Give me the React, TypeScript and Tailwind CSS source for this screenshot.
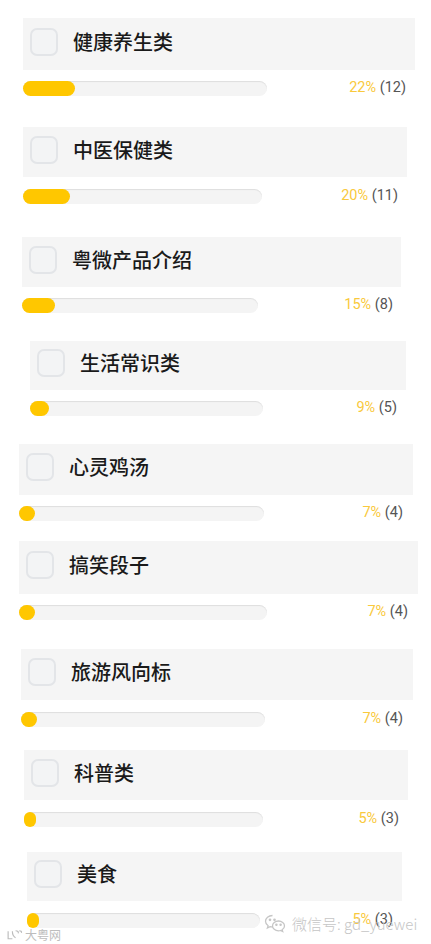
import React from "react";

type PollItem = {
  label: string;
  pct: string;
  count: string;
  fill: number;
  box: string;
  row: string;
  track: string;
};

// the source is a stitched screenshot, so each block sits a little differently
const items: PollItem[] = [
  { label: "健康养生类", pct: "22%", count: "(12)", fill: 52, box: "mt-[18px] ml-[23px] w-[392px] h-[52px]", row: "mt-[11px] ml-[23px] w-[383px]", track: "w-[244px]" },
  { label: "中医保健类", pct: "20%", count: "(11)", fill: 47, box: "mt-[31px] ml-[23px] w-[384px] h-[50px]", row: "mt-[12px] ml-[23px] w-[375px]", track: "w-[239px]" },
  { label: "粤微产品介绍", pct: "15%", count: "(8)", fill: 33, box: "mt-[33px] ml-[22px] w-[379px] h-[50px]", row: "mt-[11px] ml-[22px] w-[371px]", track: "w-[236px]" },
  { label: "生活常识类", pct: "9%", count: "(5)", fill: 19, box: "mt-[28px] ml-[30px] w-[376px] h-[49px]", row: "mt-[11px] ml-[30px] w-[367px]", track: "w-[233px]" },
  { label: "心灵鸡汤", pct: "7%", count: "(4)", fill: 16, box: "mt-[28px] ml-[19px] w-[394px] h-[51px]", row: "mt-[11px] ml-[19px] w-[384px]", track: "w-[245px]" },
  { label: "搞笑段子", pct: "7%", count: "(4)", fill: 16, box: "mt-[20px] ml-[19px] w-[399px] h-[53px]", row: "mt-[11px] ml-[19px] w-[389px]", track: "w-[248px]" },
  { label: "旅游风向标", pct: "7%", count: "(4)", fill: 16, box: "mt-[29px] ml-[21px] w-[392px] h-[51px]", row: "mt-[12px] ml-[21px] w-[382px]", track: "w-[244px]" },
  { label: "科普类", pct: "5%", count: "(3)", fill: 12, box: "mt-[23px] ml-[24px] w-[384px] h-[50px]", row: "mt-[12px] ml-[24px] w-[375px]", track: "w-[239px]" },
  { label: "美食", pct: "5%", count: "(3)", fill: 12, box: "mt-[25px] ml-[27px] w-[375px] h-[49px]", row: "mt-[12px] ml-[27px] w-[366px]", track: "w-[233px]" },
];

function PollRow({ item }: { item: PollItem }) {
  return (
    <div>
      <div className={`${item.box} flex items-center pb-[5px] pl-[7px] bg-[#f5f5f5]`}>
        <span className="w-[28px] h-[28px] shrink-0 rounded-[7px] border-2 border-[#e3e5e8] bg-[#f3f4f5]" />
        <span className="ml-[15px] text-[20px] leading-none font-medium text-[#1a1a1a] font-['Noto_Sans_CJK_SC',sans-serif]">
          {item.label}
        </span>
      </div>

      <div className={`${item.row} flex items-center justify-between`}>
        <div className={`${item.track} h-[15px] rounded-full bg-[#f4f4f4] shadow-[inset_0_1px_1px_rgba(0,0,0,0.09)]`}>
          <div className="h-full rounded-full bg-[#ffc700]" style={{ width: item.fill }} />
        </div>
        <span className="text-[14.5px] leading-none font-['Roboto',sans-serif] whitespace-nowrap">
          <span className="text-[#f9c93c]">{item.pct}</span>{" "}
          <span className="text-[#555555]">{item.count}</span>
        </span>
      </div>
    </div>
  );
}

export default function App() {
  return (
    <main className="relative w-[431px] h-[944px] overflow-hidden bg-white">
      <div className="flex flex-col">
        {items.map((item) => (
          <PollRow key={item.label} item={item} />
        ))}
      </div>

      {/* WeChat watermark */}
      <div className="absolute left-[264px] top-[913px] flex items-center gap-[6px] text-[#c6c6c6]">
        <svg width="22" height="20" viewBox="0 0 22 20" fill="none" stroke="currentColor" strokeWidth="1.3">
          <path d="M8.5 2.5c-4 0-7 2.6-7 5.8 0 1.8 1 3.4 2.6 4.5l-.7 2.2 2.6-1.3c.8.2 1.6.4 2.5.4" />
          <circle cx="6" cy="6.8" r=".7" fill="currentColor" />
          <circle cx="10.5" cy="6.8" r=".7" fill="currentColor" />
          <path d="M14.5 8c-3.4 0-6 2.2-6 4.9s2.6 4.9 6 4.9c.7 0 1.4-.1 2-.3l2.2 1.1-.6-1.9c1.4-.9 2.4-2.3 2.4-3.8 0-2.7-2.7-4.9-6-4.9z" />
          <circle cx="12.4" cy="11.8" r=".6" fill="currentColor" />
          <circle cx="16.6" cy="11.8" r=".6" fill="currentColor" />
        </svg>
        <span className="text-[15px] leading-none font-['Noto_Sans_CJK_SC',sans-serif] font-light">
          微信号: gd_yuewei
        </span>
      </div>

      {/* site watermark, bottom left */}
      <div className="absolute left-[6px] top-[929px] flex items-center gap-[2px] text-[#bdbdbd]">
        <svg width="17" height="12" viewBox="0 0 16 11" fill="none" stroke="currentColor" strokeWidth="1.1">
          <path d="M2 2v7h4M6 2c0 3 1 5 3 6M9 1.5c2 0 3 1 2.5 2.5M12.5 1.5c1.5 0 2.5.7 2 2" />
        </svg>
        <span className="text-[12px] leading-none font-['Noto_Sans_CJK_SC',sans-serif]">大粤网</span>
      </div>
    </main>
  );
}
